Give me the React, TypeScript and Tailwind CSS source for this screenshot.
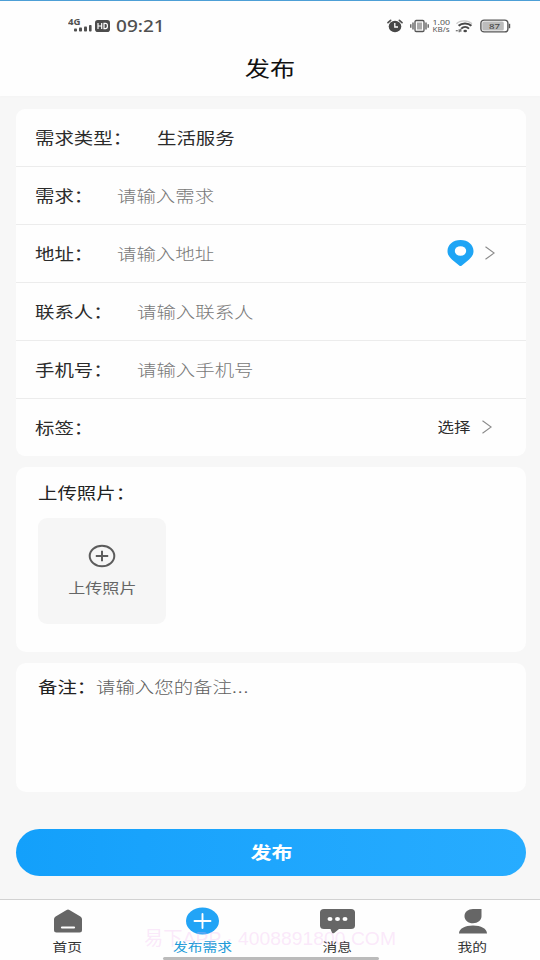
import type { ReactNode } from "react";

const FONT = "font-['Noto_Sans_CJK_SC','Noto_Sans',sans-serif]";

function Wide({ className = "", children }: { className?: string; children: ReactNode }) {
  return <span className={`inline-block shrink-0 scale-x-120 whitespace-nowrap ${className}`}>{children}</span>;
}

function Label({ className = "", children }: { className?: string; children: ReactNode }) {
  return <Wide className={`origin-left text-[16.2px] leading-6 ${className}`}>{children}</Wide>;
}

function Chevron() {
  return (
    <svg width="10" height="14" viewBox="0 0 10 14" fill="none" stroke="#8a8a8a" strokeWidth="1.1">
      <path d="M0.5 0.8 9.2 7 0.5 13.2" />
    </svg>
  );
}

function Row({ label, labelWidth, value, filled, last, children }: {
  label: string;
  labelWidth: string;
  value?: string;
  filled?: boolean;
  last?: boolean;
  children?: ReactNode;
}) {
  return (
    <div className={`flex h-[58px] items-center pb-[2px] pl-[19px] ${last ? "" : "border-b border-[#ececec]"}`}>
      <div className={`flex shrink-0 ${labelWidth}`}>
        <Label className="text-[#2b2b2b]">{label}</Label>
      </div>
      {value && <Label className={filled ? "text-[#2b2b2b]" : "font-light text-[#787878]"}>{value}</Label>}
      <div className="flex-1" />
      {children}
    </div>
  );
}

function StatusBar() {
  return (
    <div className="flex h-[48px] items-center pt-[1px] pr-[29px] pl-[68px] text-[#505050]">
      <svg width="37" height="18" viewBox="0 0 37 18">
        <text x="0" y="8" fontSize="8.5" fontWeight="700" fontFamily="Noto Sans, sans-serif" fill="#505050" textLength="12.5" lengthAdjust="spacingAndGlyphs">4G</text>
        <g fill="#505050">
          <rect x="6" y="11.5" width="3" height="3" rx=".8" />
          <rect x="11" y="10.5" width="3" height="4" rx=".8" />
          <rect x="16" y="9.5" width="3" height="5" rx=".8" />
          <rect x="21" y="8" width="2.6" height="6.5" rx=".8" />
        </g>
      </svg>
      <svg className="-ml-[10px]" width="15" height="12" viewBox="0 0 15 12">
        <rect width="15" height="12" rx="2.8" fill="#4c4c4c" />
        <path d="M3 3v6M6.7 3v6M3 6h3.7M9 3.4h1.4q2 0 2 2v1.2q0 2-2 2H9Z" fill="none" stroke="#fff" strokeWidth="1.2" />
      </svg>
      <div className="ml-[6px] flex w-[49px]">
        <span className="origin-left scale-x-122 font-['Noto_Sans',sans-serif] text-[15.6px] leading-5 font-medium whitespace-nowrap">09:21</span>
      </div>
      <div className="flex-1" />
      <svg width="16" height="14" viewBox="0 0 16 14">
        <ellipse cx="8" cy="7.5" rx="6.3" ry="5.7" fill="#484848" />
        <path d="M1 3.6 3.6 1.3M15 3.6l-2.6-2.3" stroke="#505050" strokeWidth="1.7" strokeLinecap="round" />
        <path d="M7.8 4v4h3.2" fill="none" stroke="#fff" strokeWidth="1.3" />
      </svg>
      <svg className="ml-[7px]" width="19" height="14" viewBox="0 0 19 14" fill="none" stroke="#555" strokeWidth="1.3">
        <rect x="5" y="1.5" width="9" height="11" rx="1.2" />
        <rect x="7" y="3.5" width="5" height="7" fill="#aaa" stroke="none" />
        <path d="M3 3.5v7M.8 5.2v3.6M16 3.5v7M18.2 5.2v3.6" />
      </svg>
      <svg className="ml-[3px]" width="19" height="15" viewBox="0 0 19 15" fontFamily="Noto Sans, sans-serif" fill="#555">
        <text x="0.5" y="6.5" fontSize="7.8" textLength="17.5" lengthAdjust="spacingAndGlyphs">1.00</text>
        <text x="0.5" y="13.8" fontSize="6.4" textLength="17" lengthAdjust="spacingAndGlyphs">KB/s</text>
      </svg>
      <svg className="ml-[4px]" width="18" height="14" viewBox="0 0 18 14" fill="none">
        <path d="M1.5 4.8C5 .9 13 .9 17 4.8" stroke="#ccc" strokeWidth="1.3" />
        <path d="M3.6 6.8c3.2-3.1 9.6-3.1 12.8 0" stroke="#484848" strokeWidth="2" />
        <path d="M6.2 9.6c2.3-2.1 5.6-2.1 7.8 0" stroke="#484848" strokeWidth="1.9" />
        <ellipse cx="10.2" cy="12" rx="1.8" ry="1.3" fill="#484848" />
        <path d="M.8 11.8h2M4.2 10.3v3M5.8 9.8v3" stroke="#505050" strokeWidth="1.1" />
      </svg>
      <svg className="ml-[7px]" width="31" height="14" viewBox="0 0 31 14">
        <rect x=".9" y="1.1" width="27" height="11.8" rx="3.2" fill="#fff" stroke="#555" strokeWidth="1.4" />
        <rect x="2.3" y="2.5" width="21.5" height="9" rx="1.6" fill="#bcbcbc" />
        <path d="M29.5 4.8v4.4" stroke="#555" strokeWidth="1.4" />
        <text x="9" y="9.8" fontSize="7.8" fontWeight="500" fontFamily="Noto Sans, sans-serif" fill="#484848" textLength="11" lengthAdjust="spacingAndGlyphs">87</text>
      </svg>
    </div>
  );
}

function Tab({ label, active, children }: { label: string; active?: boolean; children: ReactNode }) {
  return (
    <div className="flex flex-1 flex-col items-center pt-[6px]">
      <div className="flex h-[30px] items-center">{children}</div>
      <Wide className={`mt-[2px] text-[12.3px] leading-[18px] ${active ? "text-[#209bd8]" : "text-[#333]"}`}>{label}</Wide>
    </div>
  );
}

export default function App() {
  return (
    <div lang="zh-CN" className={`relative flex h-[960px] w-[540px] flex-col overflow-hidden bg-[#f7f7f7] ${FONT}`}>
      <header className="h-[96px] shrink-0 border-t border-[#4d9fd6] bg-[#fefefe] shadow-[0_0_3px_#f2f2f2]">
        <StatusBar />
        <h1 className="flex justify-center pt-[3px] text-[21px] leading-[30px] text-[#111]">
          <Wide>发布</Wide>
        </h1>
      </header>

      <main className="flex flex-1 flex-col pr-[14px] pl-4">
        <section className="mt-[13px] h-[347px] rounded-[9px] bg-[#fefefe]">
          <Row label="需求类型：" labelWidth="w-[122px]" value="生活服务" filled />
          <Row label="需求：" labelWidth="w-[82px]" value="请输入需求" />
          <Row label="地址：" labelWidth="w-[82px]" value="请输入地址">
            <svg width="27" height="28" viewBox="0 0 27 28">
              <path d="M13.5 1C6 1 .5 5.8.5 12c0 4.6 3 7.4 6.2 10l5.5 4.5q1.3 1 2.6 0L20.3 22c3.2-2.6 6.2-5.4 6.2-10C26.5 5.8 21 1 13.5 1Z" fill="#1ea5f5" />
              <ellipse cx="13.5" cy="12" rx="5.7" ry="4.8" fill="#fff" />
            </svg>
            <div className="mr-[31px] ml-[11px]"><Chevron /></div>
          </Row>
          <Row label="联系人：" labelWidth="w-[102px]" value="请输入联系人" />
          <Row label="手机号：" labelWidth="w-[102px]" value="请输入手机号" />
          <Row label="标签：" labelWidth="w-[82px]" last>
            <Wide className="relative -top-px origin-right text-[13.7px] leading-6 text-[#2b2b2b]">选择</Wide>
            <div className="mr-[34px] ml-[12px]"><Chevron /></div>
          </Row>
        </section>

        <section className="mt-[11px] h-[185px] rounded-[10px] bg-[#fefefe] pt-[13px] pl-[22px]">
          <div className="flex"><Label className="text-[#222]">上传照片：</Label></div>
          <button className="mt-[14px] flex h-[106px] w-[128px] flex-col items-center rounded-[9px] bg-[#f6f6f6] pt-[26px]">
            <svg width="28" height="24" viewBox="0 0 28 24" fill="none" stroke="#5c5c5c" strokeWidth="2">
              <ellipse cx="14" cy="12" rx="12.3" ry="10.2" />
              <path d="M7.8 12h12.4M14 6.8v10.4" />
            </svg>
            <Wide className="mt-[7px] text-[14.2px] leading-6 text-[#666]">上传照片</Wide>
          </button>
        </section>

        <section className="mt-[11px] flex h-[129px] rounded-[10px] bg-[#fefefe] pt-[11px] pl-[22px]">
          <div className="w-[58px] shrink-0"><Label className="text-[#222]">备注：</Label></div>
          <Label className="font-light text-[#606060]">请输入您的备注<span className="tracking-[0.8px]">...</span></Label>
        </section>

        <button className="mt-[37px] flex h-[47px] items-center justify-center rounded-full bg-linear-to-r from-[#13a0fb] to-[#27acff] text-[17.5px] font-bold text-white">
          <Wide>发布</Wide>
        </button>
      </main>

      <nav className="flex h-[61px] shrink-0 border-t border-[#d2d2d2] bg-[#fefefe]">
        <Tab label="首页">
          <svg width="28" height="24" viewBox="0 0 28 24">
            <path d="M12.6.9q1.4-.9 2.8 0l11 6.6Q28 8.6 28 10v11q0 2.5-2.5 2.5h-23Q0 23.5 0 21V10q0-1.4 1.6-2.5Z" fill="#666" />
            <path d="M8 18.5h12" stroke="#fff" strokeWidth="2.2" strokeLinecap="round" />
          </svg>
        </Tab>
        <Tab label="发布需求" active>
          <svg width="33" height="28" viewBox="0 0 33 28">
            <ellipse cx="16.5" cy="14" rx="16.5" ry="13.5" fill="#22a4f6" />
            <path d="M8.5 14h16M16.5 7v14" stroke="#fff" strokeWidth="1.9" strokeLinecap="round" />
          </svg>
        </Tab>
        <Tab label="消息">
          <svg width="35" height="25" viewBox="0 0 35 25">
            <path d="M4 0h27q4 0 4 3.5v13q0 3.5-4 3.5H19l-4.5 3.8q-1.5 1-2.5 0L10.5 20H4q-4 0-4-3.5v-13Q0 0 4 0Z" fill="#666" />
            <g fill="#fff"><ellipse cx="10" cy="10" rx="2.5" ry="2.1" /><ellipse cx="17.5" cy="10" rx="2.5" ry="2.1" /><ellipse cx="25" cy="10" rx="2.5" ry="2.1" /></g>
          </svg>
        </Tab>
        <Tab label="我的">
          <svg width="28" height="25" viewBox="0 0 28 25" fill="#666">
            <path d="M14 0h8.5v7.3c0 4-3.7 7-8.5 7s-8.5-3-8.5-7.1S9.2 0 14 0ZM0 24.5c0-5 6-8 14-8s14 3 14 8Z" />
          </svg>
        </Tab>
      </nav>
      <div className="absolute top-[957px] left-[163px] h-[3px] w-[216px] rounded-full bg-[#bbb]" />
      <div className="pointer-events-none absolute top-[926px] left-[144px] text-[#f3b5f0]/30">
        <svg width="254" height="24" fill="currentColor"><text x="0" y="19" fontFamily="Liberation Sans, Noto Sans CJK SC, sans-serif" fontSize="19" textLength="252" lengthAdjust="spacingAndGlyphs">易下APP · 4008891800.COM</text></svg>
      </div>
    </div>
  );
}
